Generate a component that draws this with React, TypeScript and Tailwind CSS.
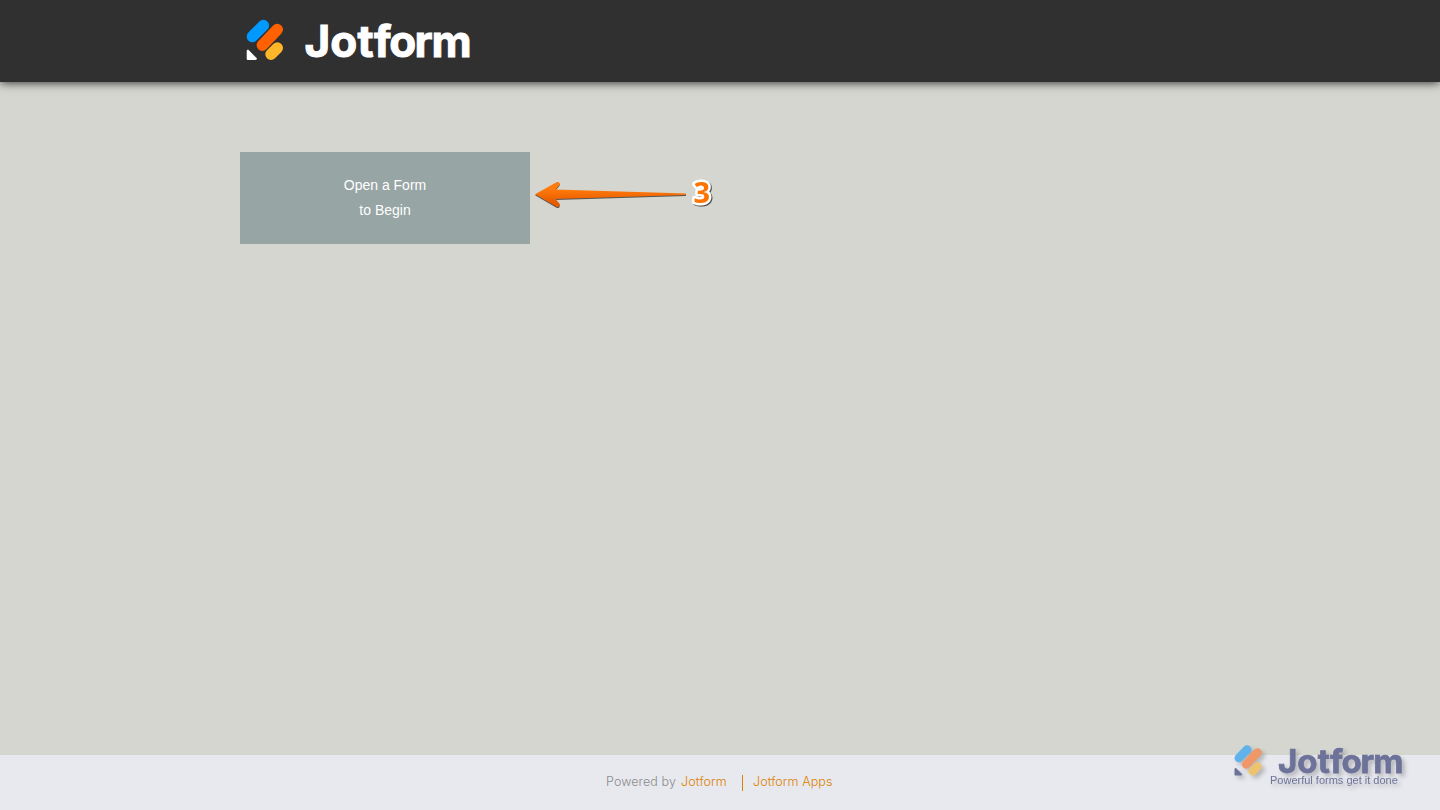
import React from 'react';

type LogoProps = {
  className: string;
  ink: string;
  faded?: boolean;
};

function JotformLogo({ className, ink, faded }: LogoProps) {
  const colors = faded ? ['#5fb2ea', '#ef9767', '#edc36f'] : ['#0099ff', '#ff6100', '#ffb629'];
  return (
    <svg viewBox="0 0 226 44" className={className} fill="none" overflow="visible">
      <g strokeWidth="11.4" strokeLinecap="round">
        <path d="M6.4 18.6 17.4 7.5" stroke={colors[0]} />
        <path d="M16.3 27.2 31.3 11.5" stroke={colors[1]} />
        <path d="M25 36.3 31.3 30" stroke={colors[2]} />
      </g>
      <path d="M.7 33.2c0-1.3 1.3-1.8 2.2-.9l7.5 7.5c.9.9.4 2.2-.9 2.2H2.2C1.2 42 .7 41.5.7 40.5Z" fill={ink} />
      <text
        x="58.5 84.3 111.5 128 143.2 168.5 185.6"
        y="39"
        fill={ink}
        stroke={ink}
        strokeWidth="1"
        className="font-['Inter',sans-serif] text-[44px] font-bold"
      >
        Jotform
      </text>
    </svg>
  );
}

function StepArrow() {
  return (
    <svg width="190" height="44" viewBox="0 0 190 44" className="absolute left-[290px] top-[20px]">
      <defs>
        <linearGradient id="arrow" x1="0" y1="0" x2="0" y2="1">
          <stop offset="0.3" stopColor="#ff7a0a" />
          <stop offset="0.8" stopColor="#e65c00" />
        </linearGradient>
      </defs>
      <path
        d="M5 22.3 26.5 10.2c2.4-1.2 4.3 1.3 2.6 3.2L25.5 17.6 156 21.6v1.4L25.5 27l3.7 4.3c1.6 2.1-.4 4.5-2.7 3.4Z"
        fill="url(#arrow)"
        className="drop-shadow-[0_1px_0.5px_rgba(0,0,0,0.6)]"
      />
      <text
        x="163.5"
        y="31"
        fill="#ff7300"
        stroke="#ffffff"
        strokeWidth="5"
        strokeLinejoin="round"
        paintOrder="stroke"
        className="font-['Open_Sans',sans-serif] text-[29px] font-bold drop-shadow-[1px_1px_0.5px_rgba(0,0,0,0.65)]"
      >
        3
      </text>
    </svg>
  );
}

export default function App() {
  return (
    <div className="relative flex h-[810px] w-full flex-col overflow-hidden bg-[#d5d6d0] font-['Liberation_Sans',Arial,sans-serif]">
      <header className="h-[82px] shrink-0 bg-[#303030] shadow-[0_1px_9px_rgba(0,0,0,0.75)]">
        <div className="mx-auto w-[960px] pl-[6px] pt-[18px]">
          <JotformLogo className="h-[44px] w-[226px]" ink="#ffffff" />
        </div>
      </header>

      <main className="mx-auto w-[960px] flex-1 pt-[70px]">
        <div className="relative w-[290px]">
          <button className="flex h-[92px] w-full flex-col items-center justify-center bg-[#97a5a4] text-[14px] leading-[25px] text-white">
            <span>Open a Form</span>
            <span>to Begin</span>
          </button>
          <StepArrow />
        </div>
      </main>

      <footer className="flex h-[55px] shrink-0 items-center justify-center bg-[#e8e9ef] font-['Inter',sans-serif] text-[12.5px] font-light text-[#8c8c8c]">
        <div className="flex h-4 items-center">
          <span className="w-[75px] whitespace-nowrap tracking-[0.1px]">Powered by</span>
          <a className="w-[61px] tracking-[0.15px] text-[#dc8100]">Jotform</a>
          <a className="flex h-4 w-[92px] items-center whitespace-nowrap border-l border-[#dc8100] pl-[10px] tracking-[0.1px] text-[#dc8100]">Jotform Apps</a>
        </div>
      </footer>

      <div className="absolute left-[1234px] top-[744px] w-[172px] drop-shadow-[3px_3px_2px_rgba(0,0,0,0.22)]">
        <JotformLogo className="h-[33px] w-[169.5px]" ink="#6d7299" faded />
        <p className="-mt-[4px] pl-[36px] text-[11px] leading-[14px] whitespace-nowrap text-[#6d7299]">Powerful forms get it done</p>
      </div>
    </div>
  );
}
